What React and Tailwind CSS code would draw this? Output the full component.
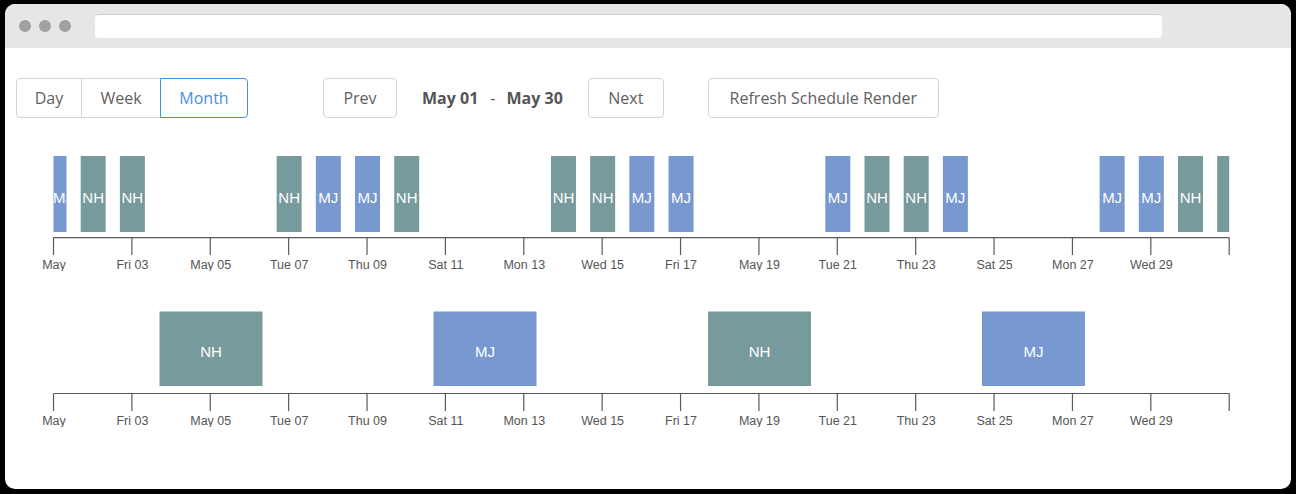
import React from "react";

const SCALE = 39.19;
const X0 = 48.5;
const X1 = X0 + 30 * SCALE;
const tickX = (d) => X0 + (d - 1) * SCALE;

const LABELS = [
  [1, "May"], [3, "Fri 03"], [5, "May 05"], [7, "Tue 07"], [9, "Thu 09"],
  [11, "Sat 11"], [13, "Mon 13"], [15, "Wed 15"], [17, "Fri 17"], [19, "May 19"],
  [21, "Tue 21"], [23, "Thu 23"], [25, "Sat 25"], [27, "Mon 27"], [29, "Wed 29"],
];

const MJ = "#7898d0";
const NH = "#779a9c";

const ROW1 = [
  [1, "MJ"], [2, "NH"], [3, "NH"], [7, "NH"], [8, "MJ"], [9, "MJ"], [10, "NH"],
  [14, "NH"], [15, "NH"], [16, "MJ"], [17, "MJ"], [21, "MJ"], [22, "NH"], [23, "NH"],
  [24, "MJ"], [28, "MJ"], [29, "MJ"], [30, "NH"], [31, "NH"],
];

const ROW2 = [
  [154.5, "NH"], [428.5, "MJ"], [703, "NH"], [977, "MJ"],
];

function Axis({ y, tickEnd, labelY }) {
  return (
    <g>
      <line x1={X0} y1={y} x2={X1} y2={y} stroke="#5a5a5a" strokeWidth="1.2" />
      {[1, 3, 5, 7, 9, 11, 13, 15, 17, 19, 21, 23, 25, 27, 29, 31].map((d) => (
        <line key={d} x1={tickX(d)} y1={y} x2={tickX(d)} y2={tickEnd} stroke="#5a5a5a" strokeWidth="1.2" />
      ))}
      {LABELS.map(([d, t]) => (
        <text
          key={d}
          x={tickX(d) + 0.5}
          y={labelY}
          textAnchor="middle"
          fontSize="12.5"
          fill="#555"
          fontFamily="'Liberation Sans', Arial, sans-serif"
        >
          {t}
        </text>
      ))}
    </g>
  );
}

function Chart1() {
  return (
    <svg width="1286" height="131" className="block shrink-0">
      <defs>
        <clipPath id="axisclip">
          <rect x={X0} y="0" width={X1 - X0} height="131" />
        </clipPath>
        <clipPath id="firstbar">
          <rect x={X0} y="16" width={tickX(1) + 13 - X0} height="76" />
        </clipPath>
      </defs>
      <g clipPath="url(#axisclip)">
        {ROW1.map(([d, who]) => {
          const cx = tickX(d);
          const first = d === 1;
          const last = d === 31;
          return (
            <g key={d}>
              <rect x={cx - 12} y="16" width="25" height="76" fill={who === "MJ" ? MJ : NH} />
              {!last && (
                <text
                  x={first ? X0 - 0.5 : cx + 0.5}
                  y="63.3"
                  textAnchor={first ? "start" : "middle"}
                  fontSize="15"
                  fill="#fff"
                  fontFamily="'Liberation Sans', Arial, sans-serif"
                  clipPath={first ? "url(#firstbar)" : undefined}
                >
                  {who}
                </text>
              )}
            </g>
          );
        })}
      </g>
      <Axis y={97.6} tickEnd={115} labelY={129.3} />
    </svg>
  );
}

function Chart2() {
  return (
    <svg width="1286" height="127" className="block shrink-0 mt-[29px]">
      {ROW2.map(([x, who]) => (
        <g key={x}>
          <rect x={x} y="11.5" width="103" height="74.5" fill={who === "MJ" ? MJ : NH} />
          <text
            x={x + 51.5}
            y="57.3"
            textAnchor="middle"
            fontSize="15"
            fill="#fff"
            fontFamily="'Liberation Sans', Arial, sans-serif"
          >
            {who}
          </text>
        </g>
      ))}
      <Axis y={93.5} tickEnd={111} labelY={125.1} />
    </svg>
  );
}

export default function App() {
  const btn =
    "h-[40px] flex items-center justify-center border border-[#d4d4d4] rounded-[4px] bg-white text-[#606060] text-[16px]";
  return (
    <div className="w-[1296px] h-[494px] bg-black pt-[4px] pl-[5px] pr-[5px] pb-[5px] font-['Open_Sans',sans-serif]">
      <div className="h-full bg-white rounded-[10px] overflow-hidden flex flex-col">
        <div className="h-[44px] shrink-0 bg-[#e6e6e6] flex items-center">
          <div className="ml-[14px] flex gap-[8px]">
            <div className="w-[12px] h-[12px] rounded-full bg-[#a1a1a1]" />
            <div className="w-[12px] h-[12px] rounded-full bg-[#a1a1a1]" />
            <div className="w-[12px] h-[12px] rounded-full bg-[#a1a1a1]" />
          </div>
          <div className="ml-[24px] w-[1067px] h-[24px] bg-white rounded-[4px] border-t border-[#cfcfcf]" />
        </div>

        <div className="mt-[30px] ml-[11px] flex items-center h-[40px]">
          <div className="flex h-[40px]">
            <div className="w-[66px] h-full flex items-center justify-center border border-[#d4d4d4] rounded-l-[4px] text-[#606060] text-[16px]">
              Day
            </div>
            <div className="w-[78px] h-full flex items-center justify-center border-y border-[#d4d4d4] text-[#606060] text-[16px]">
              Week
            </div>
            <div className="w-[88px] h-full flex items-center justify-center border border-[#4a8fdf] rounded-r-[4px] text-[#4a8fdf] text-[16px]">
              Month
            </div>
          </div>
          <div className={`${btn} ml-[75px] w-[74px]`}>Prev</div>
          <div className="ml-[25px] flex items-center text-[#555] text-[16px]">
            <span className="font-bold">May 01</span>
            <span className="ml-[12px]">-</span>
            <span className="ml-[11px] font-bold">May 30</span>
          </div>
          <div className={`${btn} ml-[25px] w-[76px]`}>Next</div>
          <div className={`${btn} ml-[44px] w-[231px]`}>Refresh Schedule Render</div>
        </div>

        <div className="mt-[22px]">
          <Chart1 />
        </div>
        <Chart2 />
      </div>
    </div>
  );
}
